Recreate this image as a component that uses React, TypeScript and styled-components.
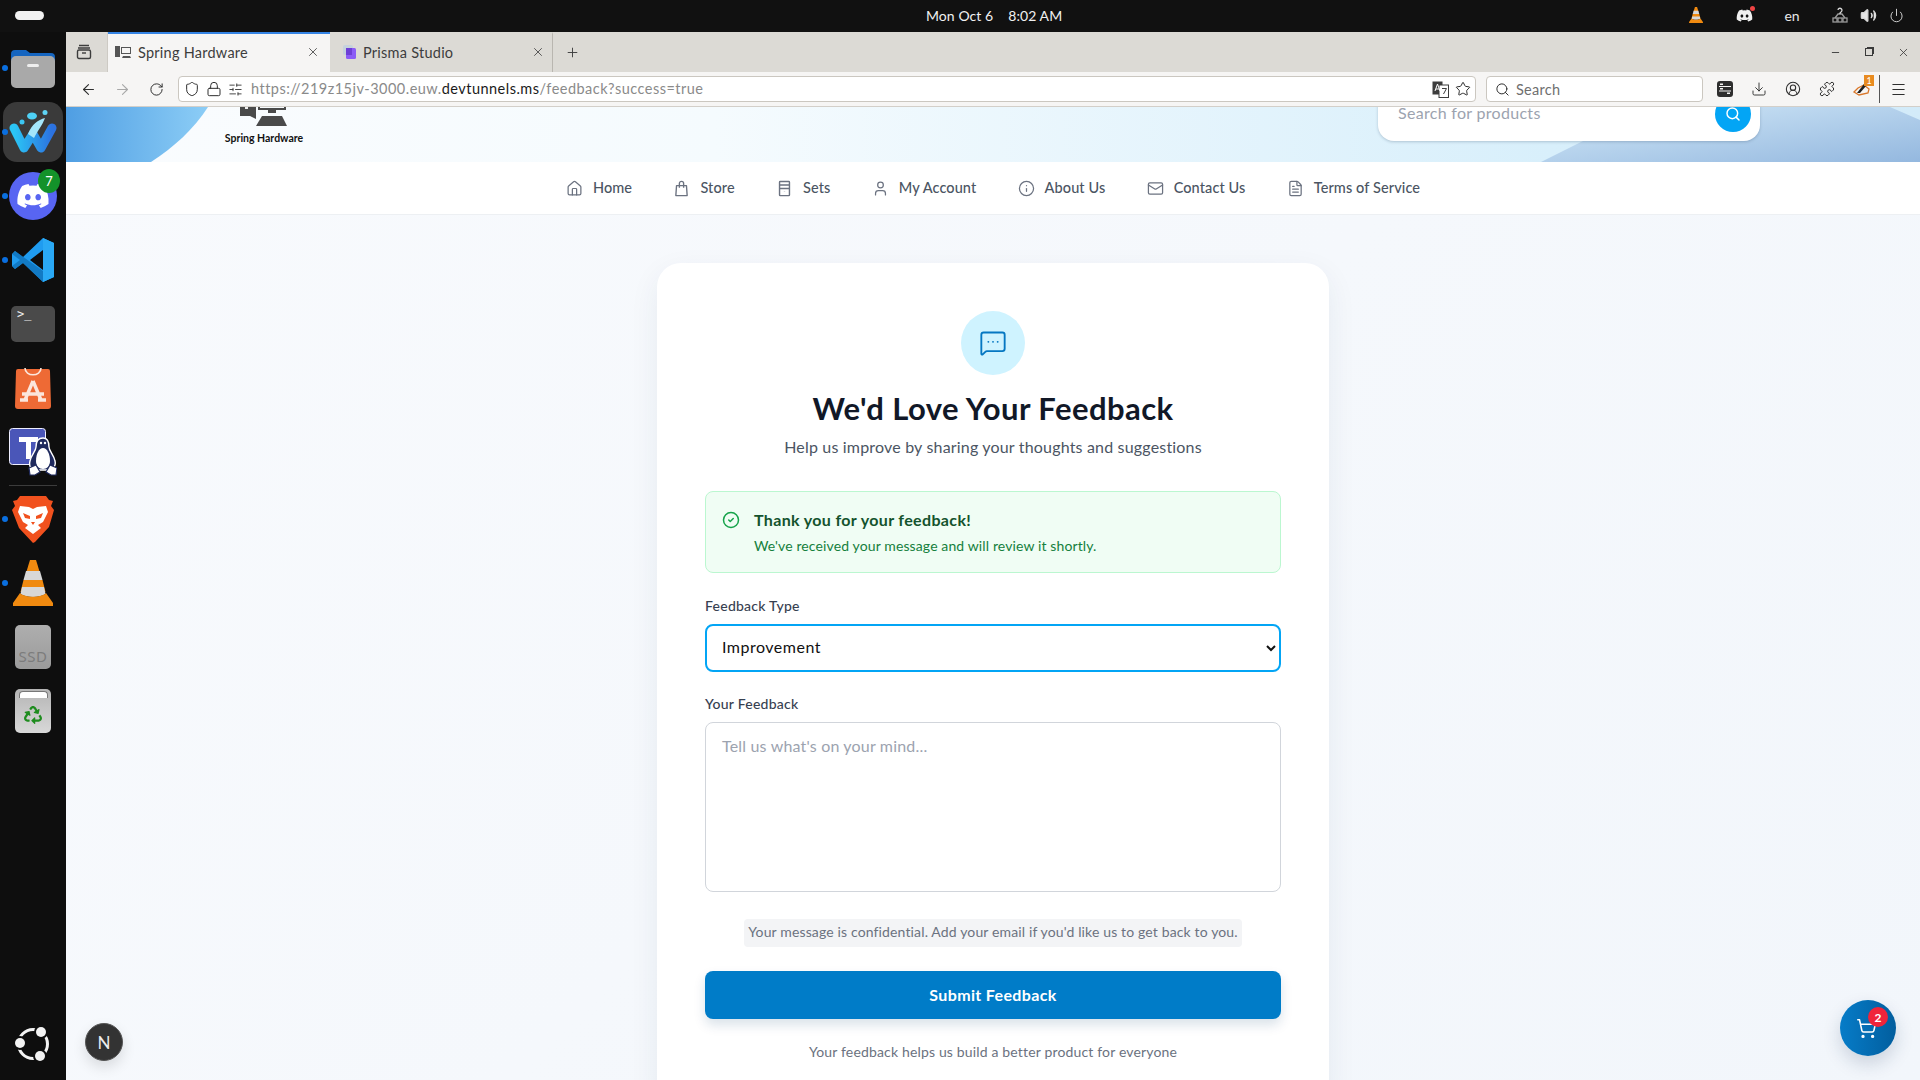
import React from "react";
import styled, { createGlobalStyle } from "styled-components";
import {
  ArrowLeft, ArrowRight, RotateCw, Shield, Lock, SlidersHorizontal, Star, Search, Download, CircleUserRound, Puzzle, Menu,
  X, Plus, Minus, Home, User, Info, Mail, FileText, MessageSquareMore, CircleCheck, ShoppingCart, Volume2, Power,
} from "lucide-react";
import { FaDiscord, FaRecycle } from "react-icons/fa";

const FONT = `Lato, "Noto Sans", "Liberation Sans", sans-serif`;

const Global = createGlobalStyle`
  html, body { margin: 0; padding: 0; height: 100%; overflow: hidden; background: #111; }
  * { box-sizing: border-box; }
  body { font-family: ${FONT}; }
`;

const Root = styled.div`
  width: 1920px; height: 1080px; overflow: hidden; position: relative;
  display: flex; flex-direction: column; background: #111;
`;
const TopBar = styled.header`
  height: 32px; flex: none; background: #111; color: #f0f0f0; padding-bottom: 2px;
  display: grid; grid-template-columns: 926px auto 1fr; align-items: center;
  font-size: 14px;
`;
const Pill = styled.span`
  display: block; width: 29px; height: 9px; border-radius: 5px; background: #f2f2f2; margin-left: 15px;
`;
const Clock = styled.div` display: flex; gap: 15px; white-space: nowrap; letter-spacing: 0.07px; `;
const Tray = styled.div`
  display: flex; align-items: center; justify-content: flex-end; padding-right: 10px; color: #d8d8d8;
`;
const TrayGroup = styled.div<{ $gap?: number }>`
  display: flex; align-items: center; margin-left: ${(p) => p.$gap ?? 0}px;
`;
const TraySlot = styled.span<{ $w: number }>`
  width: ${(p) => p.$w}px; display: flex; justify-content: center; align-items: center; position: relative;
`;
const TrayDot = styled.i`
  position: absolute; top: -1px; right: 13px; width: 5px; height: 5px; border-radius: 50%; background: #ef4444;
`;
const Lang = styled.span` font-size: 14px; color: #e8e8e8; `;

const Body = styled.div` flex: 1; display: flex; min-height: 0; `;
const Dock = styled.nav`
  width: 66px; flex: none; background: #0e0e0e; display: flex; flex-direction: column; align-items: center; position: relative;
`;
const DockSlot = styled.div<{ $top: number; $h: number; $w: number }>`
  margin-top: ${(p) => p.$top}px; height: ${(p) => p.$h}px; width: ${(p) => p.$w}px; flex: none; position: relative;
  display: flex; align-items: center; justify-content: center;
  & > svg { display: block; }
`;
const RunDot = styled.i`
  position: absolute; left: calc(5px - (66px - 100%) / 2); top: 50%; width: 6px; height: 6px; margin: -3px 0 0 -3px;
  border-radius: 50%; background: #0a6fe0;
`;
const DockTile = styled.div`
  width: 60px; height: 60px; border-radius: 14px; background: #3a3a3a; display: flex; align-items: center; justify-content: center;
`;
const DiscordDisc = styled.div`
  width: 48px; height: 48px; border-radius: 50%; background: #5865f2; color: #fff; display: flex; align-items: center; justify-content: center;
`;
const DockBadge = styled.span`
  position: absolute; right: -3px; top: -3px; width: 22px; height: 24px; border-radius: 50%; background: #13922a; color: #fff;
  font-size: 13px; display: flex; align-items: center; justify-content: center;
`;
const DockRule = styled.hr`
  width: 48px; height: 1px; margin: 9px 0 0; border: 0; background: #3c3c3c; flex: none;
`;
const DockPush = styled.div`
  margin-top: auto; padding-bottom: 18px; svg { display: block; }
`;
const TrashTile = styled.div`
  width: 36px; height: 44px; border-radius: 5px; background: linear-gradient(#b5b5b5, #d8d8d8); color: #1e8c1e;
  display: flex; flex-direction: column; align-items: center; gap: 8px; padding-top: 2px;
`;
const TrashLip = styled.span`
  width: 29px; height: 7px; border-radius: 4px 4px 0 0; background: #fff; border: 1px solid #777; border-bottom: 0;
`;
const SsdTile = styled.div`
  width: 36px; height: 44px; border-radius: 5px; background: linear-gradient(#aeaeae, #9b9b9b); color: #7c7c7c; font-size: 15px;
  display: flex; align-items: flex-end; justify-content: center; padding-bottom: 3px; letter-spacing: 0.5px; font-family: "Noto Sans", sans-serif;
`;
const TermTile = styled.div`
  width: 44px; height: 36px; border-radius: 5px; background: #4a4a4a; color: #eee; font-family: "DejaVu Sans Mono", monospace;
  font-size: 12px; padding: 1px 0 0 6px; line-height: 14px;
`;

const Browser = styled.main` flex: 1; min-width: 0; display: flex; flex-direction: column; position: relative; `;
const TabStrip = styled.div`
  height: 40px; flex: none; background: #dcdad5; display: flex; align-items: stretch; color: #3d3d3d;
`;
const AllTabs = styled.div`
  width: 42px; display: flex; align-items: center; justify-content: center; border-right: 1px solid #cdcac4; color: #3d3d3d; padding-right: 5px;
`;
const Tab = styled.div<{ $active?: boolean }>`
  width: ${(p) => (p.$active ? 222 : 223)}px; flex: none; display: flex; align-items: center;
  padding: 0 ${(p) => (p.$active ? 10 : 7)}px 2px ${(p) => (p.$active ? 7 : 13)}px; gap: 7px;
  font-size: 14.5px; letter-spacing: 0.25px;
  background: ${(p) => (p.$active ? "#f6f5f4" : "transparent")};
  border-top: ${(p) => (p.$active ? "2px solid #3584e4" : "2px solid transparent")};
  border-right: ${(p) => (p.$active ? "0" : "1px solid #b9b6b0")};
`;
const TabTitle = styled.span` flex: 1; white-space: nowrap; `;
const NewTab = styled.div` width: 38px; display: flex; align-items: center; justify-content: center; color: #3d3d3d; `;
const WinButtons = styled.div`
  margin-left: auto; display: flex; align-items: center; color: #3a3a3a;
`;
const WinBtn = styled.span` width: 34px; display: flex; justify-content: center; align-items: center; `;
const RestoreGlyph = styled.span`
  width: 8px; height: 8px; border: 1px solid #3a3a3a; box-shadow: 1.5px -1.5px 0 -0.5px #3a3a3a;
`;
const Toolbar = styled.div`
  height: 35px; flex: none; background: #f6f5f4; border-bottom: 1px solid #d3cfc9; display: flex; align-items: center; padding: 0 5px; color: #2e2e2e;
`;
const ToolBtn = styled.span<{ $dim?: boolean }>`
  width: 34px; height: 26px; flex: none; display: flex; align-items: center; justify-content: center; position: relative;
  color: ${(p) => (p.$dim ? "#a8a8a8" : "#2e2e2e")};
`;
const UrlBar = styled.div`
  flex: 1; min-width: 0; margin-left: 5px; height: 26px; background: #fff; border: 1px solid #cbc7c0; border-radius: 4px;
  display: flex; align-items: center; padding: 0 4px 0 5px; gap: 6px; color: #2e2e2e;
`;
const UrlText = styled.div`
  flex: 1; margin-left: 2px; font-size: 14.5px; letter-spacing: 0.47px; color: #8a8a8a; white-space: nowrap; padding-bottom: 2px;
  b { font-weight: 400; color: #1a1a1a; }
`;
const SearchBar = styled.div`
  width: 217px; flex: none; margin: 0 5px 0 10px; height: 26px; background: #fff; border: 1px solid #cbc7c0; border-radius: 4px;
  display: flex; align-items: center; padding-left: 8px; gap: 6px; font-size: 14.5px; letter-spacing: 0.3px; color: #6f6f6f;
`;
const ToolSep = styled.i` width: 1px; height: 28px; background: #555; margin: 0 1px 0 1px; flex: none; `;
const ExtBadge = styled.span`
  position: absolute; top: -1px; right: 4px; width: 10px; height: 11px; background: #e88b20; color: #fff; font-size: 9px; line-height: 11px; text-align: center;
`;

const Page = styled.section`
  flex: 1; min-height: 0; overflow: hidden; position: relative; background: linear-gradient(135deg, #f8fafd 0%, #f2f6fb 100%);
`;
const Banner = styled.div`
  height: 55px; position: relative; overflow: hidden; display: flex; justify-content: space-between; align-items: flex-end; padding: 0 160px 0 159px;
  background: #f3f9fd;
`;
const BannerArt = styled.svg` position: absolute; inset: 0; width: 100%; height: 100%; `;
const Logo = styled.div`
  position: relative; display: flex; flex-direction: column; align-items: center; padding-bottom: 17px; width: 78px; flex: none;
`;
const LogoName = styled.span`
  font-size: 10.5px; line-height: 13px; font-weight: 700; color: #111; white-space: nowrap; margin-top: 6px; letter-spacing: 0;
`;
const SearchBox = styled.div`
  position: relative; width: 382px; height: 54px; flex: none; margin-bottom: 21px; background: #fff; border-radius: 16px;
  box-shadow: 0 1px 3px rgba(30, 60, 90, .25); display: flex; align-items: center; padding: 0 9px 0 20px;
`;
const SearchHint = styled.span` flex: 1; color: #9ca3af; font-size: 16px; letter-spacing: 0.3px; padding-bottom: 4px; `;
const SearchGo = styled.span`
  width: 36px; height: 36px; border-radius: 50%; background: #03a5f5; color: #fff; display: flex; align-items: center; justify-content: center;
`;
const NavBar = styled.nav`
  height: 53px; background: #fff; border-bottom: 1px solid #edf0f3; display: flex; align-items: center; justify-content: center; gap: 41.3px; padding-bottom: 2px;
`;
const NavItem = styled.a`
  display: flex; align-items: center; gap: 10px; color: #4b5563; font-size: 14.5px; font-weight: 500; letter-spacing: 0.1px; white-space: nowrap;
  svg { color: #6b7280; flex: none; margin-top: 2px; }
`;
const Content = styled.div` padding-top: 48px; display: flex; justify-content: center; `;
const Card = styled.article`
  width: 672px; flex: none; background: #fff; border-radius: 24px; padding: 48px; box-shadow: 0 10px 30px rgba(30, 50, 80, .07);
`;
const Head = styled.div` display: flex; flex-direction: column; align-items: center; `;
const IconDisc = styled.div`
  width: 64px; height: 64px; border-radius: 50%; background: #cff3ff; color: #0577c2; display: flex; align-items: center; justify-content: center;
`;
const Title = styled.h1`
  margin: 15px 0 9px; font-size: 31px; line-height: 36px; font-weight: 700; color: #111827; letter-spacing: 0.45px; white-space: nowrap;
`;
const Sub = styled.p` margin: 0; font-size: 16px; line-height: 24px; color: #4b5563; letter-spacing: 0.18px; white-space: nowrap; `;
const Alert = styled.div`
  margin-top: 32px; height: 82px; border: 1px solid #bbf7d0; border-radius: 8px; background: #f0fdf4; padding: 16px 16px 0 16px;
  display: flex; gap: 14px;
`;
const AlertIcon = styled.span` color: #16a34a; padding-top: 3px; flex: none; display: flex; `;
const AlertTitle = styled.div` font-size: 16px; line-height: 24px; font-weight: 700; color: #14532d; letter-spacing: 0.35px; `;
const AlertText = styled.div` margin-top: 4px; font-size: 14px; line-height: 20px; color: #15803d; letter-spacing: 0.12px; `;
const Field = styled.label` display: block; margin-top: 24px; `;
const FieldName = styled.span`
  display: block; font-size: 14px; line-height: 18px; font-weight: 500; color: #374151; margin-bottom: 8px; letter-spacing: 0.25px;
`;
const Select = styled.select`
  display: block; width: 100%; height: 48px; margin: 9px 0 -1px; padding: 0 12px 3px 11px; border: 2px solid #03a5f5; border-radius: 8px; background: #fff;
  font-family: ${FONT}; font-size: 16px; color: #111; outline: 0; letter-spacing: 0.5px;
`;
const Area = styled.textarea`
  display: block; width: 100%; height: 170px; margin-top: 9px; padding: 11px 16px; border: 1px solid #d1d5db; border-radius: 8px; background: #fff;
  font-family: ${FONT}; font-size: 16px; line-height: 24px; resize: none; outline: 0; letter-spacing: 0.18px;
  &::placeholder { color: #9ca3af; opacity: 1; }
`;
const NoteRow = styled.div` margin-top: 27px; display: flex; justify-content: center; `;
const Note = styled.span`
  height: 28px; background: #f3f4f6; border-radius: 4px; padding: 0 4px; font-size: 14px; line-height: 26px; color: #6b7280; letter-spacing: 0.14px; white-space: nowrap;
`;
const Submit = styled.button`
  display: block; width: 100%; height: 48px; margin-top: 24px; border: 0; border-radius: 8px; background: #007cc8; color: #fff; padding-bottom: 3px;
  font-family: ${FONT}; font-size: 16px; font-weight: 700; letter-spacing: 0.35px; box-shadow: 0 6px 12px rgba(0, 60, 110, .15);
`;
const Foot = styled.p` margin: 23px 0 0; text-align: center; font-size: 14px; line-height: 20px; color: #6b7280; letter-spacing: 0.16px; `;
const NextBadge = styled.div`
  position: absolute; left: 19px; bottom: 19px; width: 38px; height: 38px; border-radius: 50%; background: #333; border: 1px solid #555;
  color: #eee; font-size: 17px; display: flex; align-items: center; justify-content: center; box-shadow: 0 6px 14px rgba(0,0,0,.12);
`;
const CartFab = styled.div`
  position: absolute; right: 24px; bottom: 24px; width: 56px; height: 56px; border-radius: 50%; background: linear-gradient(90deg, #067cc8, #025e9e);
  color: #fff; display: flex; align-items: center; justify-content: center; padding-right: 4px; box-shadow: 0 8px 18px rgba(20, 50, 90, .18);
`;
const CartCount = styled.span`
  position: absolute; top: 7px; right: 8px; width: 20px; height: 20px; border-radius: 50%; background: #f0243a; color: #fff;
  font-size: 12px; font-weight: 700; display: flex; align-items: center; justify-content: center;
`;

const FilesIcon = () => (
  <svg width="44" height="40" viewBox="0 0 44 40">
    <path d="M0 6a4 4 0 0 1 4-4h11l4 3h21a4 4 0 0 1 4 4v10H0z" fill="#1565c0" />
    <rect y="8" width="44" height="32" rx="5" fill="#a9a9a9" />
    <rect x="16" y="16" width="12" height="3" rx="1.5" fill="#eee" />
  </svg>
);
const WindsurfIcon = () => (
  <svg width="50" height="44" viewBox="0 0 50 44">
    <defs>
      <linearGradient id="wa" x1="0" x2="1"><stop offset="0" stopColor="#2bc6f5" /><stop offset="1" stopColor="#2c72e0" /></linearGradient>
    </defs>
    <path d="M6 18 L16 38 L25 24 L33 38 L44 18" fill="none" stroke="url(#wa)" strokeWidth="9" strokeLinejoin="round" strokeLinecap="round" />
    <path d="M20 24 C24 14 30 10 37 8 C34 16 30 20 26 28z" fill="#a4e6fb" />
    <circle cx="14" cy="12" r="2.5" fill="#3cc6f2" /><ellipse cx="24" cy="6" rx="5" ry="3.5" fill="#4ed0f5" /><circle cx="37" cy="2.5" r="2.5" fill="#5ed4f5" />
  </svg>
);
const VsIcon = () => (
  <svg width="42" height="44" viewBox="0 0 42 44">
    <path d="M31 0 L42 5 V39 L31 44 L11 25 L3 31 L0 28 V16 L3 13 L11 19z M31 12 L18 22 L31 32z" fill="#1f9cf0" fillRule="evenodd" />
    <path d="M31 0 L42 5 V39 L31 44z" fill="#2aa9f5" />
    <path d="M0 16 L3 13 L31 33 V44 L11 25 L3 31 L0 28 L8 22z" fill="#0f6fb5" opacity=".75" />
  </svg>
);
const StoreIcon = () => (
  <svg width="36" height="42" viewBox="0 0 36 42">
    <path d="M3 2h30a2 2 0 0 1 2 2l1 35a3 3 0 0 1-3 3H3a3 3 0 0 1-3-3L1 4a2 2 0 0 1 2-2z" fill="#ee6a35" />
    <path d="M10 1c0 9 16 9 16 0" fill="none" stroke="#fbe6dc" strokeWidth="1.6" />
    <path d="M18 14 L10 33 M18 14 L26 33 M7 27 H29 M5 33h8 M23 33h8" stroke="#fbe6dc" strokeWidth="3.4" fill="none" />
  </svg>
);
const TeamsIcon = () => (
  <svg width="48" height="48" viewBox="0 0 48 48">
    <rect x="0.5" y="0.5" width="36" height="36" rx="3" fill="#4a56b8" stroke="#eef" />
    <path d="M10 9h19v5h-7v17h-5V14h-7z" fill="#fff" />
    <path d="M34 10c-5 0-7 4-7 9 0 4-5 8-6 14-1 4 0 7 3 9h18c3-2 5-5 4-9-1-6-6-10-6-14 0-5-1-9-6-9z" fill="#1f2a5e" stroke="#fff" strokeWidth="1.4" />
    <path d="M34 20c-4 0-7 6-7 13 0 5 3 8 7 8s7-3 7-8c0-7-3-13-7-13z" fill="#fff" />
    <path d="M20 40l7-3 4 7-5 3h-5zM48 40l-7-3-4 7 5 3h5z" fill="#fff" stroke="#1f2a5e" strokeWidth="1.2" />
    <circle cx="32" cy="15" r="1.2" fill="#fff" /><circle cx="36" cy="15" r="1.2" fill="#fff" />
  </svg>
);
const BraveIcon = () => (
  <svg width="42" height="48" viewBox="0 0 42 48">
    <path d="M8 1h26l3 4 4 1-2 5 3 4-5 17-14 15-2 1L7 33 0 15l3-4-2-5 4-1z" fill="#f1511e" />
    <path d="M8 11l9 1 4 2 4-2 9-1 2 6-5 10-5 3 3 3-8 6-8-6 3-3-5-3L6 17z" fill="#fff" />
    <path d="M11 18l7 3v3l-5-1zM31 18l-7 3v3l5-1zM19 27h4l-2 3z" fill="#f1511e" />
  </svg>
);
const ConeIcon = ({ w = 40, h = 46 }: { w?: number; h?: number }) => (
  <svg width={w} height={h} viewBox="0 0 40 46">
    <path d="M17 0h6l4 13H13z" fill="#f08a10" />
    <path d="M13 11h14l2.5 9h-19z" fill="#d8d8d8" />
    <path d="M10.5 20h19l3 12H7.5z" fill="#f08a10" />
    <path d="M9 27h22l1.5 7c-6 4-19 4-25 0z" fill="#d8d8d8" />
    <path d="M7 33c5 5 21 5 26 0l7 10v3H0v-3z" fill="#f08a10" />
  </svg>
);
const UbuntuIcon = () => (
  <svg width="36" height="36" viewBox="0 0 36 36" fill="none">
    <circle cx="18" cy="18" r="14.5" stroke="#f3f3f3" strokeWidth="3" />
    <circle cx="5" cy="17" r="7" fill="#0e0e0e" /><circle cx="26" cy="6" r="7" fill="#0e0e0e" /><circle cx="25" cy="30" r="7" fill="#0e0e0e" />
    <circle cx="5" cy="17" r="5" fill="#f3f3f3" /><circle cx="26" cy="6" r="5" fill="#f3f3f3" /><circle cx="25" cy="30" r="5" fill="#f3f3f3" />
  </svg>
);
const LogoArt = () => (
  <svg width="48" height="26" viewBox="0 0 48 26" fill="#4a4a4a">
    <path d="M0 0h16v19l-6-3H0z" />
    <rect x="5" y="6" width="3" height="3" fill="#eee" />
    <path d="M18 0h28v10H18zM20 0v8h24V0z" fillRule="evenodd" />
    <rect x="28" y="10" width="8" height="3" />
    <path d="M22 16h20l5 10H16z" />
  </svg>
);
const BagGlyph = () => (
  <svg width="17" height="17" viewBox="0 0 24 24" fill="none" stroke="currentColor" strokeWidth="1.9" strokeLinejoin="round">
    <path d="M5 8h14l1 14H4z" /><path d="M9 11V5a3 3 0 0 1 6 0v6" />
  </svg>
);
const SetsGlyph = () => (
  <svg width="17" height="17" viewBox="0 0 24 24" fill="none" stroke="currentColor" strokeWidth="2">
    <rect x="5" y="2" width="14" height="20" rx="1" /><path d="M5 7h14M5 12h14M12 16.5v.5" />
  </svg>
);
const TranslateGlyph = () => (
  <svg width="17" height="17" viewBox="0 0 17 17">
    <rect x="0.5" y="0.5" width="10" height="13" fill="#3d3d3d" />
    <rect x="7" y="4" width="9.5" height="12.5" fill="#fff" stroke="#3d3d3d" />
    <path d="M3 10l2.5-7 2.5 7M3.8 8h3.4" stroke="#fff" fill="none" />
    <path d="M10 7.5h4.5L11.5 13" stroke="#3d3d3d" fill="none" />
  </svg>
);
const StorageGlyph = () => (
  <svg width="16" height="16" viewBox="0 0 16 16">
    <rect width="16" height="16" rx="3" fill="#2e2e2e" />
    <path d="M2 5.5h12M2 10h12" stroke="#f6f5f4" />
    <rect x="3" y="2.5" width="3" height="1.5" fill="#f6f5f4" /><rect x="3" y="7" width="3" height="1.5" fill="#f6f5f4" /><rect x="10" y="11.5" width="3" height="1.5" fill="#f6f5f4" />
  </svg>
);
const ExtGlyph = () => (
  <svg width="17" height="14" viewBox="0 0 17 14" fill="none">
    <path d="M1 10l5 3 9-2 1-4-5-4-6 3z" stroke="#d9772a" strokeWidth="1.3" />
    <path d="M4 11L11 2l2 2-6 7z" fill="#1f1f1f" />
  </svg>
);
const NetGlyph = () => (
  <svg width="16" height="16" viewBox="0 0 16 16" fill="none" stroke="#9a9a9a" strokeWidth="1.3">
    <rect x="1" y="11" width="4" height="4" /><rect x="11" y="11" width="4" height="4" /><rect x="6" y="11" width="4" height="4" />
    <path d="M3 11l3-4h4l3 4" />
    <path d="M6 3a2 2 0 1 1 3 2l-1 1v1" stroke="#d8d8d8" />
  </svg>
);

const NAV = [
  { label: "Home", icon: <Home size={17} strokeWidth={1.75} /> },
  { label: "Store", icon: <BagGlyph /> },
  { label: "Sets", icon: <SetsGlyph /> },
  { label: "My Account", icon: <User size={17} strokeWidth={1.75} /> },
  { label: "About Us", icon: <Info size={17} strokeWidth={1.75} /> },
  { label: "Contact Us", icon: <Mail size={17} strokeWidth={1.75} /> },
  { label: "Terms of Service", icon: <FileText size={17} strokeWidth={1.75} /> },
];

export default function App() {
  return (
    <Root>
      <Global />
      <TopBar>
        <Pill />
        <Clock><span>Mon Oct 6</span><span>8:02 AM</span></Clock>
        <Tray>
          <TrayGroup>
            <TraySlot $w={48}><ConeIcon w={14} h={16} /></TraySlot>
            <TraySlot $w={48}><FaDiscord size={17} color="#f0f0f0" /><TrayDot /></TraySlot>
            <TraySlot $w={48}><Lang>en</Lang></TraySlot>
          </TrayGroup>
          <TrayGroup $gap={10}>
            <TraySlot $w={28}><NetGlyph /></TraySlot>
            <TraySlot $w={28}><Volume2 size={17} fill="#e8e8e8" /></TraySlot>
            <TraySlot $w={28}><Power size={15} strokeWidth={1.5} /></TraySlot>
          </TrayGroup>
        </Tray>
      </TopBar>
      <Body>
        <Dock>
          <DockSlot $top={16} $h={40} $w={44}><RunDot /><FilesIcon /></DockSlot>
          <DockSlot $top={14} $h={60} $w={60}><RunDot /><DockTile><WindsurfIcon /></DockTile></DockSlot>
          <DockSlot $top={10} $h={48} $w={48}><RunDot /><DiscordDisc><FaDiscord size={34} /></DiscordDisc><DockBadge>7</DockBadge></DockSlot>
          <DockSlot $top={18} $h={44} $w={42}><RunDot /><VsIcon /></DockSlot>
          <DockSlot $top={24} $h={36} $w={44}><TermTile>&gt;_</TermTile></DockSlot>
          <DockSlot $top={25} $h={42} $w={36}><StoreIcon /></DockSlot>
          <DockSlot $top={19} $h={48} $w={48}><TeamsIcon /></DockSlot>
          <DockRule />
          <DockSlot $top={9} $h={48} $w={42}><RunDot /><BraveIcon /></DockSlot>
          <DockSlot $top={17} $h={46} $w={40}><RunDot /><ConeIcon /></DockSlot>
          <DockSlot $top={19} $h={44} $w={36}><SsdTile>SSD</SsdTile></DockSlot>
          <DockSlot $top={20} $h={44} $w={36}><TrashTile><TrashLip /><FaRecycle size={18} /></TrashTile></DockSlot>
          <DockPush><UbuntuIcon /></DockPush>
        </Dock>
        <Browser>
          <TabStrip>
            <AllTabs><svg width="16" height="16" viewBox="0 0 16 16" fill="none" stroke="currentColor" strokeWidth="1.4"><path d="M3 1.5h10M2 4h12" /><rect x="1.5" y="6" width="13" height="8.5" rx="1.5" /><path d="M6 9h4" /></svg></AllTabs>
            <Tab $active>
              <svg width="16" height="14" viewBox="0 0 16 14" fill="#555"><path d="M0 1h5v11H0z" /><path d="M6 2h10v7H6zM7 3v5h8V3z" fillRule="evenodd" /><path d="M8 11h7l1 2H7z" /></svg>
              <TabTitle>Spring Hardware</TabTitle>
              <X size={14} strokeWidth={1.4} />
            </Tab>
            <Tab>
              <svg width="13" height="14" viewBox="0 0 13 14"><rect width="10" height="10" rx="2" fill="#c6d2dd" /><rect x="3" y="3" width="10" height="11" rx="1.5" fill="#8b5cf6" /><rect x="3" y="3" width="6" height="7" fill="#6d3fd6" /></svg>
              <TabTitle>Prisma Studio</TabTitle>
              <X size={14} strokeWidth={1.4} />
            </Tab>
            <NewTab><Plus size={15} strokeWidth={1.5} /></NewTab>
            <WinButtons>
              <WinBtn><Minus size={11} /></WinBtn>
              <WinBtn><RestoreGlyph /></WinBtn>
              <WinBtn><X size={13} strokeWidth={1.5} /></WinBtn>
            </WinButtons>
          </TabStrip>
          <Toolbar>
            <ToolBtn><ArrowLeft size={17} strokeWidth={1.5} /></ToolBtn>
            <ToolBtn $dim><ArrowRight size={17} strokeWidth={1.5} /></ToolBtn>
            <ToolBtn><RotateCw size={15} strokeWidth={1.6} /></ToolBtn>
            <UrlBar>
              <Shield size={16} strokeWidth={1.5} />
              <Lock size={16} strokeWidth={1.5} />
              <SlidersHorizontal size={15} strokeWidth={1.4} />
              <UrlText>https://219z15jv-3000.euw.<b>devtunnels.ms</b>/feedback?success=true</UrlText>
              <TranslateGlyph />
              <Star size={16} strokeWidth={1.5} />
            </UrlBar>
            <SearchBar><Search size={15} strokeWidth={1.6} color="#2e2e2e" />Search</SearchBar>
            <ToolBtn><StorageGlyph /></ToolBtn>
            <ToolBtn><Download size={16} strokeWidth={1.4} /></ToolBtn>
            <ToolBtn><CircleUserRound size={16} strokeWidth={1.6} /></ToolBtn>
            <ToolBtn><Puzzle size={16} strokeWidth={1.5} /></ToolBtn>
            <ToolBtn><ExtGlyph /><ExtBadge>1</ExtBadge></ToolBtn>
            <ToolSep />
            <ToolBtn><Menu size={17} strokeWidth={1.5} /></ToolBtn>
          </Toolbar>
          <Page>
            <Banner>
              <BannerArt viewBox="0 0 1854 55" preserveAspectRatio="none">
                <defs>
                  <linearGradient id="bgA" x1="0" x2="1"><stop offset="0" stopColor="#fafcfe" /><stop offset=".35" stopColor="#f5fbfe" /><stop offset=".8" stopColor="#d8effb" /><stop offset="1" stopColor="#d3ebf9" /></linearGradient>
                  <linearGradient id="bgB" x1="0" x2="1"><stop offset="0" stopColor="#4f9ee3" /><stop offset="1" stopColor="#8ccdf6" /></linearGradient>
                  <linearGradient id="bgC" x1="0" y1="0" x2="1" y2="1"><stop offset="0" stopColor="#d3e9f8" /><stop offset="1" stopColor="#94b8df" /></linearGradient>
                </defs>
                <rect width="1854" height="55" fill="url(#bgA)" />
                <path d="M0 0H142C128 22 108 40 85 55H0z" fill="url(#bgB)" />
                <path d="M1475 55L1585 0H1824L1854 13V55z" fill="url(#bgC)" />
              </BannerArt>
              <Logo><LogoArt /><LogoName>Spring Hardware</LogoName></Logo>
              <SearchBox><SearchHint>Search for products</SearchHint><SearchGo><Search size={16} strokeWidth={2.2} /></SearchGo></SearchBox>
            </Banner>
            <NavBar>
              {NAV.map((n) => <NavItem key={n.label}>{n.icon}{n.label}</NavItem>)}
            </NavBar>
            <Content>
              <Card>
                <Head>
                  <IconDisc><MessageSquareMore size={28} strokeWidth={1.6} /></IconDisc>
                  <Title>We'd Love Your Feedback</Title>
                  <Sub>Help us improve by sharing your thoughts and suggestions</Sub>
                </Head>
                <Alert>
                  <AlertIcon><CircleCheck size={18} strokeWidth={2} /></AlertIcon>
                  <div>
                    <AlertTitle>Thank you for your feedback!</AlertTitle>
                    <AlertText>We've received your message and will review it shortly.</AlertText>
                  </div>
                </Alert>
                <Field>
                  <FieldName>Feedback Type</FieldName>
                  <Select defaultValue="improvement">
                    <option value="improvement">Improvement</option>
                    <option value="bug">Bug</option>
                    <option value="other">Other</option>
                  </Select>
                </Field>
                <Field>
                  <FieldName>Your Feedback</FieldName>
                  <Area placeholder="Tell us what's on your mind..." />
                </Field>
                <NoteRow><Note>Your message is confidential. Add your email if you'd like us to get back to you.</Note></NoteRow>
                <Submit type="button">Submit Feedback</Submit>
                <Foot>Your feedback helps us build a better product for everyone</Foot>
              </Card>
            </Content>
            <NextBadge>N</NextBadge>
            <CartFab><ShoppingCart size={21} strokeWidth={1.8} /><CartCount>2</CartCount></CartFab>
          </Page>
        </Browser>
      </Body>
    </Root>
  );
}
